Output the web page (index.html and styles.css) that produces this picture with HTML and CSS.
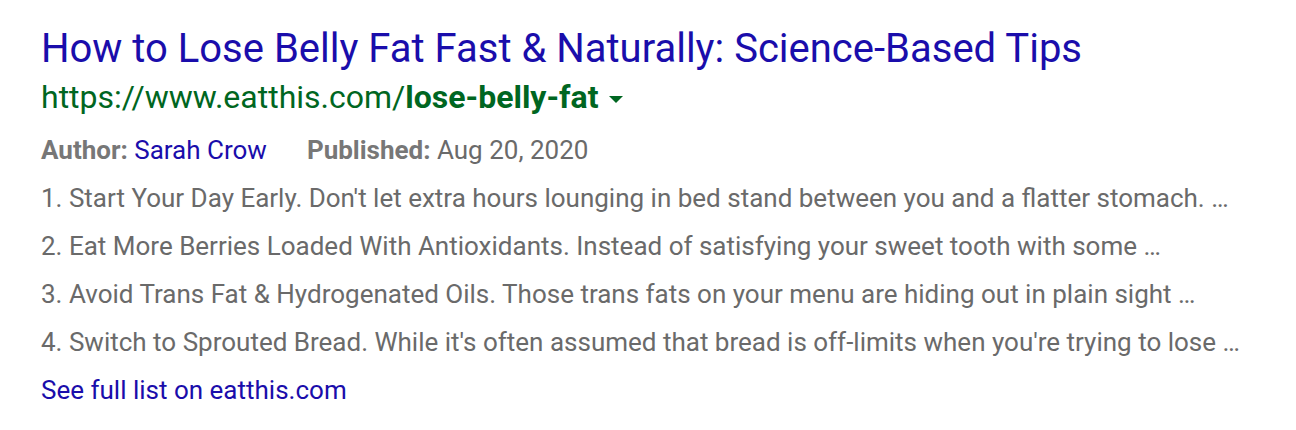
FILE: index.html
```html
<!DOCTYPE html>
<html>
<head>
<meta charset="utf-8">
<link rel="stylesheet" href="styles.css">
</head>
<body>
<div class="result">
  <a class="title" href="#">How to Lose Belly Fat Fast &amp; Naturally: Science-Based Tips</a>
  <div class="url">https://www.eatthis.com/<b>lose-belly-fat</b><span class="caret"></span></div>
  <div class="meta">
    <span class="item"><b>Author:</b> <a href="#">Sarah Crow</a></span>
    <span class="item"><b>Published:</b> Aug 20, 2020</span>
  </div>
  <ol class="list">
    <li>1. Start Your Day Early. Don't let extra hours lounging in bed stand between you and a flatter stomach. …</li>
    <li>2. Eat More Berries Loaded With Antioxidants. Instead of satisfying your sweet tooth with some …</li>
    <li>3. Avoid Trans Fat &amp; Hydrogenated Oils. Those trans fats on your menu are hiding out in plain sight …</li>
    <li>4. Switch to Sprouted Bread. While it's often assumed that bread is off-limits when you're trying to lose …</li>
  </ol>
  <a class="more" href="#">See full list on eatthis.com</a>
</div>
</body>
</html>
```

FILE: styles.css
```css
html, body {
  margin: 0;
  padding: 0;
  background: #fff;
}
body {
  font-family: Roboto, "Liberation Sans", Arial, sans-serif;
}
.result {
  padding: 25px 0 0 41px;
  display: flex;
  flex-direction: column;
  align-items: flex-start;
}
a {
  color: #1a0dab;
  text-decoration: none;
}
.title {
  font-size: 40px;
  line-height: 48px;
}
.url {
  font-size: 32px;
  line-height: 40px;
  color: #006621;
  margin-top: 4px;
  display: flex;
  align-items: center;
}
.url b {
  font-weight: 700;
}
.caret {
  width: 0;
  height: 0;
  border-left: 7px solid transparent;
  border-right: 7px solid transparent;
  border-top: 7px solid #006621;
  margin-left: 11px;
  margin-top: 4px;
}
.meta {
  font-size: 26px;
  line-height: 48px;
  color: #6a6a6a;
  margin-top: 9px;
  display: flex;
  gap: 40px;
}
.meta b {
  color: #777;
}
.list {
  list-style: none;
  margin: 0;
  padding: 0;
  font-size: 26px;
  line-height: 48px;
  color: #6a6a6a;
}
.more {
  font-size: 26px;
  line-height: 48px;
}
```
